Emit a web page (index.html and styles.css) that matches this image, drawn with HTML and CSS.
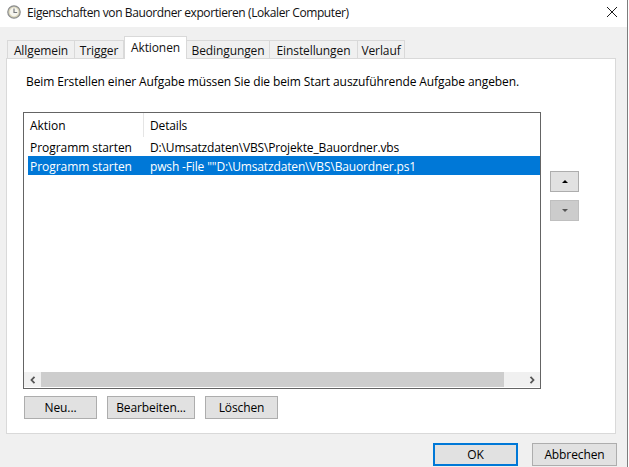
FILE: index.html
```html
<!DOCTYPE html>
<html lang="de">
<head>
    <meta charset="UTF-8">
    <meta name="viewport" content="width=device-width, initial-scale=1.0">
    <title>Eigenschaften von Bauordner exportieren</title>
    <link rel="stylesheet" href="styles.css">
</head>
<body>
    <div class="dialog">
        <div class="titlebar">
            <svg class="title-icon" width="14" height="14" viewBox="0 0 14 14">
                <circle cx="7" cy="7" r="6.2" fill="#d8d3b8" stroke="#8a8c8e" stroke-width="1.2"/>
                <circle cx="7" cy="7" r="4.4" fill="#f6f5ee"/>
                <path d="M7 3.6V7.5H10.2" fill="none" stroke="#777a7d" stroke-width="1.2"/>
            </svg>
            <span class="title-text">Eigenschaften von Bauordner exportieren (Lokaler Computer)</span>
            <svg class="close-icon" width="10" height="10" viewBox="0 0 10 10">
                <path d="M0 0L10 10M10 0L0 10" stroke="#1a1a1a" stroke-width="1" fill="none"/>
            </svg>
        </div>

        <div class="content">
            <div class="tabs">
                <div class="tab tab-general">Allgemein</div>
                <div class="tab tab-trigger">Trigger</div>
                <div class="tab tab-active">Aktionen</div>
                <div class="tab tab-conditions">Bedingungen</div>
                <div class="tab tab-settings">Einstellungen</div>
                <div class="tab tab-history">Verlauf</div>
            </div>

            <div class="panel">
                <p class="hint">Beim Erstellen einer Aufgabe müssen Sie die beim Start auszuführende Aufgabe angeben.</p>

                <div class="list-area">
                    <div class="list">
                        <div class="list-head">
                            <div class="col-action">Aktion</div>
                            <div class="col-details head-details">Details</div>
                        </div>
                        <div class="list-body">
                            <div class="list-row">
                                <div class="col-action">Programm starten</div>
                                <div class="col-details">D:\Umsatzdaten\VBS\Projekte_Bauordner.vbs</div>
                            </div>
                            <div class="list-row selected">
                                <div class="col-action">Programm starten</div>
                                <div class="col-details">pwsh -File ""D:\Umsatzdaten\VBS\Bauordner.ps1</div>
                            </div>
                        </div>
                        <div class="hscroll">
                            <div class="scroll-btn">
                                <svg width="6" height="8" viewBox="0 0 6 8"><path d="M4.5 0.8L1.5 4L4.5 7.2" fill="none" stroke="#555" stroke-width="1.8"/></svg>
                            </div>
                            <div class="scroll-thumb"></div>
                            <div class="scroll-track">
                                <svg width="6" height="8" viewBox="0 0 6 8"><path d="M1.5 0.8L4.5 4L1.5 7.2" fill="none" stroke="#555" stroke-width="1.8"/></svg>
                            </div>
                        </div>
                    </div>

                    <div class="move-btns">
                        <div class="move-btn">
                            <svg width="6" height="3" viewBox="0 0 6 3"><path d="M3 0L6 3H0Z" fill="#000"/></svg>
                        </div>
                        <div class="move-btn disabled">
                            <svg width="6" height="3" viewBox="0 0 6 3"><path d="M0 0H6L3 3Z" fill="#555"/></svg>
                        </div>
                    </div>
                </div>

                <div class="list-btns">
                    <button class="btn btn-new">Neu...</button>
                    <button class="btn btn-edit">Bearbeiten...</button>
                    <button class="btn btn-new">Löschen</button>
                </div>
            </div>

            <div class="footer">
                <button class="btn btn-footer btn-default">OK</button>
                <button class="btn btn-footer">Abbrechen</button>
            </div>
        </div>
    </div>
</body>
</html>
```

FILE: styles.css
```css
* {
    margin: 0;
    padding: 0;
    box-sizing: border-box;
}

body {
    font-family: 'Open Sans', 'Noto Sans', sans-serif;
    font-size: 12px;
    letter-spacing: -0.1px;
    color: #000;
    background: #fff;
    width: 629px;
    height: 467px;
    overflow: hidden;
}

.dialog {
    width: 628px;
    height: 467px;
    border-right: 1px solid #7d7d7d;
    display: flex;
    flex-direction: column;
}

.titlebar {
    height: 27px;
    flex: none;
    background: #fff;
    display: flex;
    align-items: center;
    padding: 0 10px 3px 7px;
}

.title-icon {
    margin-right: 6px;
}

.title-text {
    flex: 1;
    color: #111;
    letter-spacing: -0.4px;
}

.content {
    flex: 1;
    background: #f0f0f0;
    padding: 9px 11px 0 6px;
}

.tabs {
    display: flex;
    align-items: flex-end;
    height: 22px;
    padding-left: 1px;
}

.tab {
    height: 18px;
    line-height: 20px;
    text-align: center;
    background: #f0f0f0;
    border: 1px solid #d9d9d9;
    border-bottom: none;
    border-left: none;
    color: #111;
}

.tab-general {
    width: 68px;
    border-left: 1px solid #d9d9d9;
}

.tab-trigger {
    width: 49px;
}

.tab-active {
    width: 63px;
    height: 23px;
    line-height: 22px;
    background: #fff;
    border-left: 1px solid #d9d9d9;
    margin-bottom: -1px;
    position: relative;
    z-index: 1;
}

.tab-conditions {
    width: 83px;
}

.tab-settings {
    width: 88px;
}

.tab-history {
    width: 47px;
}

.panel {
    height: 376px;
    background: #fff;
    border: 1px solid #d9d9d9;
    padding: 14px 0 0 16px;
}

.hint {
    height: 39px;
    line-height: 17px;
    padding-left: 3px;
}

.list-area {
    display: flex;
}

.list {
    width: 518px;
    height: 277px;
    border: 1px solid #646464;
    display: flex;
    flex-direction: column;
}

.list-head {
    height: 24px;
    display: flex;
    line-height: 25px;
    padding-left: 4px;
}

.list-body {
    flex: 1;
    padding-left: 4px;
}

.list-row {
    height: 19px;
    line-height: 21px;
    display: flex;
}

.list-row.selected {
    background: #0078d7;
    color: #fff;
}

.col-action {
    width: 115px;
    padding-left: 2px;
    flex: none;
    letter-spacing: -0.05px;
}

.col-details {
    padding-left: 7px;
    letter-spacing: -0.15px;
}

.head-details {
    border-left: 1px solid #e5e5e5;
    padding-left: 6px;
    height: 24px;
}

.hscroll {
    height: 15px;
    margin-bottom: 1px;
    display: flex;
}

.scroll-btn {
    width: 17px;
    background: #f0f0f0;
    display: flex;
    align-items: center;
    justify-content: center;
}

.scroll-thumb {
    width: 463px;
    background: #cdcdcd;
}

.scroll-track {
    flex: 1;
    background: #f0f0f0;
    display: flex;
    align-items: center;
    justify-content: flex-end;
    padding-right: 5px;
}

.move-btns {
    margin: 59px 0 0 9px;
    display: flex;
    flex-direction: column;
    gap: 8px;
}

.move-btn {
    width: 29px;
    height: 21px;
    background: #e1e1e1;
    border: 1px solid #adadad;
    display: flex;
    align-items: center;
    justify-content: center;
}

.move-btn.disabled {
    background: #cccccc;
    border-color: #bfbfbf;
}

.list-btns {
    display: flex;
    gap: 10px;
    margin: 7px 0 0 1px;
}

.btn {
    height: 23px;
    font-family: inherit;
    font-size: 12px;
    letter-spacing: -0.1px;
    color: #000;
    background: #e1e1e1;
    border: 1px solid #adadad;
}

.btn-new {
    width: 73px;
}

.btn-edit {
    width: 88px;
}

.footer {
    display: flex;
    justify-content: flex-end;
    gap: 14px;
    margin: 9px -1px 0 0;
}

.btn-footer {
    width: 85px;
    height: 23px;
}

.btn-default {
    border: 2px solid #0078d7;
}
```
